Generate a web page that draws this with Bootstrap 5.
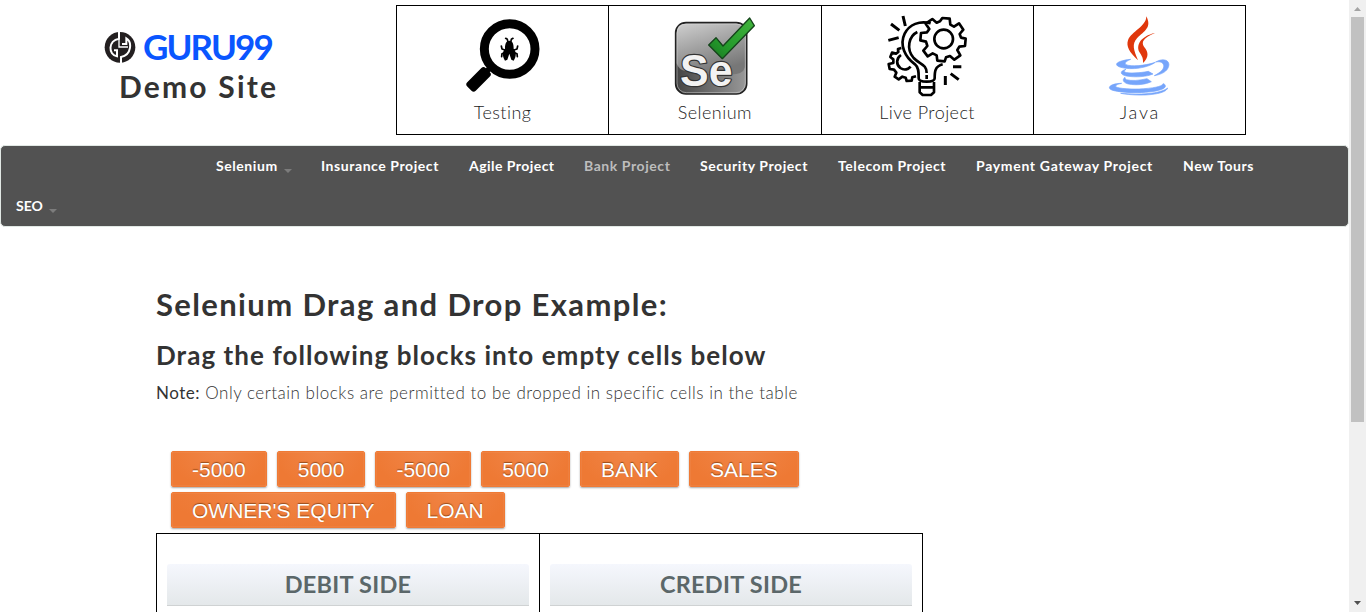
<!DOCTYPE html>
<html lang="en">
<head>
<meta charset="utf-8">
<meta name="viewport" content="width=device-width, initial-scale=1">
<title>Guru99 Demo Site</title>
<link href="https://cdn.jsdelivr.net/npm/bootstrap@5.3.0/dist/css/bootstrap.min.css" rel="stylesheet">
<style>
body{font-family:Lato,"Open Sans",sans-serif;color:#333;background:#fff;font-size:17px;line-height:1.4}
.site-head{height:146px}
.brand-block{width:396px;padding:27px 0 0 103px}
.brand-row{height:40px}
.brand-name{font-size:35px;line-height:38px;padding-bottom:2px;font-weight:700;color:#0a56ff;margin-left:6px;letter-spacing:-1.9px}
.demo-title{font-size:30px;font-weight:700;line-height:36px;margin:1px 0 0 16px;letter-spacing:2.2px}
.tool-grid{width:850px;height:130px;margin-top:5px;border:1px solid #000}
.tool-cell{flex:1 1 0;padding-top:2px;color:#222;font-weight:300;font-size:18px;line-height:24px;letter-spacing:.45px}
.tool-cell+.tool-cell{border-left:1px solid #000}
.tool-cell span{margin-top:2px}
.tool-cell .lbl-d{letter-spacing:1.8px;padding-left:1px}
.main-nav{width:1349px;background:#525252;border-radius:5px;border:1px solid #e1e8e4;padding:0;height:82px;margin-top:-1px}
.main-nav .nav-link{color:#fff;font-weight:700;font-size:14px;line-height:20px;padding:10px 0 10px 15px;height:40px;white-space:nowrap;letter-spacing:.57px}
.main-nav .nav-first{margin-left:200px}
.main-nav .nav-link.active{color:#bdbdbd}
.main-nav .nav-link.tight{letter-spacing:0}
.main-nav .nav-link.w-c{letter-spacing:.45px}
.main-nav .nav-link.w-f{letter-spacing:.69px}
.main-nav .dropdown-toggle::after{border-top-color:#7c7c7c;border-width:4px 4px 0;margin-left:6px;vertical-align:-2px}
.w-a{width:105px}.w-b{width:148px}.w-c{width:115px}.w-d{width:116px}.w-e{width:138px}.w-f{width:207px}.w-g{width:100px}
.lesson{width:767px;margin-left:156px;padding-top:58px}
.t1{font-size:31px;font-weight:700;line-height:38px;margin:0;letter-spacing:1.37px;white-space:nowrap}
.t2{font-size:26px;font-weight:700;line-height:34px;margin:15px 0 0;letter-spacing:1.06px;white-space:nowrap}
.note{font-weight:300;font-size:17px;line-height:24px;margin:9px 0 0;white-space:nowrap;letter-spacing:.52px}
.blocks{gap:5px 10px;padding:46px 100px 0 15px}
.drag{font:21px/24px "Liberation Sans",sans-serif;color:#fff;height:36px;padding:6px 20px 4px;border:1px solid #ef7a35;border-radius:2px;background:radial-gradient(ellipse at 50% 0,#f08547,#ee7934 75%);box-shadow:0 1px 2px rgba(0,0,0,.35),inset 0 0 1px rgba(255,255,255,.5);text-shadow:0 -1px 1px rgba(90,40,0,.6);white-space:nowrap}
.sides{height:300px;margin-top:5px;border:1px solid #000}
.side{flex:1 1 0;padding:30px 10px}
.side+.side{border-left:1px solid #000}
.side h3{height:42px;margin:0;background:linear-gradient(#f5f7fd,#e4e8ea);border-bottom:1px solid #cfd2d3;border-radius:3px 3px 0 0;color:#5b6769;font-size:23.5px;line-height:41px;font-weight:700;text-align:center;letter-spacing:.25px}
.scroller{width:17px;background:#f0f0f0}
.thumb{width:13px;height:405px;background:#c1c1c1}
</style>
</head>
<body class="vh-100 overflow-hidden d-flex">
<main class="flex-grow-1 overflow-hidden">
<header class="site-head d-flex">
 <div class="brand-block">
  <div class="brand-row d-flex align-items-center">
   <svg width="34" height="34" viewBox="9 7 102 102">
    <circle cx="60" cy="59" r="46" fill="#231f20"/>
    <g fill="none" stroke="#fff" stroke-width="6">
     <path d="M57 10V33C24 38 24 82 51 86V68H42"/>
     <path d="M63 110V88C96 82 96 42 79 32V49H66"/>
     <path d="M57 33V58H84" stroke-width="4"/>
    </g>
   </svg>
   <span class="brand-name">GURU99</span>
  </div>
  <h2 class="demo-title">Demo Site</h2>
 </div>
 <div class="tool-grid d-flex">
  <div class="tool-cell d-flex flex-column align-items-center">
   <svg width="90" height="90" viewBox="205 24 270 270">
    <circle cx="360" cy="147" r="76" fill="none" stroke="#000" stroke-width="27"/>
    <path d="M308 197L285 220" stroke="#000" stroke-width="16"/>
    <rect x="-38" y="-18" width="78" height="36" rx="9" transform="translate(266 239) rotate(-45)"/>
    <path d="M359 122c-11 0-13 12-13 24-9 10-8 24 0 36l7-3 6-18 6 18 7 3c8-12 9-26 0-36 0-12-2-24-13-24z"/>
    <g fill="none" stroke="#000" stroke-width="5" stroke-linecap="round" stroke-linejoin="round"><path d="M348 115l5 3 2 9M370 115l-5 3-2 9M335 138l2 9 11 4M384 138l-2 9-11 4M336 170l1-9 11-4M383 170l-1-9-11-4"/></g>
   </svg><span>Testing</span>
  </div>
  <div class="tool-cell d-flex flex-column align-items-center">
   <svg width="90" height="90" viewBox="195 24 270 270">
    <defs><linearGradient id="metal" x1="0" y1="0" x2="0.4" y2="1"><stop stop-color="#cfcfcf"/><stop offset=".5" stop-color="#a2a2a2"/><stop offset="1" stop-color="#777"/></linearGradient>
    <linearGradient id="metal-low" x1="0" y1="0" x2="1" y2="0"><stop stop-color="#444"/><stop offset="1" stop-color="#999"/></linearGradient>
    <linearGradient id="leaf" x1="0" y1="1" x2="1" y2="0"><stop stop-color="#1a7422"/><stop offset=".35" stop-color="#249a2b"/><stop offset="1" stop-color="#43b53e"/></linearGradient></defs>
    <rect x="212" y="68" width="213" height="214" rx="31" fill="url(#metal-low)" stroke="#222" stroke-width="5"/>
    <path d="M215 190V99q0-28 28-28h151q28 0 28 28v91q0 28-28 32-70 8-150-8-24-4-29-24z" fill="url(#metal)"/>
    <rect x="216" y="72" width="205" height="206" rx="28" fill="none" stroke="#ddd" stroke-opacity=".5" stroke-width="3"/>
    <text x="225" y="259" font-family="Liberation Sans,sans-serif" font-weight="700" font-size="134" textLength="158" lengthAdjust="spacingAndGlyphs" fill="#f2f2f2" stroke="#333" stroke-width="7" stroke-linejoin="round" paint-order="stroke">Se</text>
    <path d="M311 135l22-22 21 25 80-84 14 23-96 99z" fill="url(#leaf)" stroke="#14441a" stroke-width="4" stroke-linejoin="round"/>
   </svg><span>Selenium</span>
  </div>
  <div class="tool-cell d-flex flex-column align-items-center">
   <svg width="90" height="90" viewBox="187 25 270 270" fill="none" stroke="#000" stroke-width="8" stroke-linejoin="round">
    <path d="M250 49l7 30M214 73l25 19M206 122l31-8M400 201h25M393 222l24 18M377 229v27" stroke-width="9"/>
    <path d="M333 71c-33-9-64 3-78 31-17 35 2 71 31 92 12 10 11 26 11 42 0 8 8 10 24 10s24-2 24-10c0-20 0-35 24-42"/>
    <path d="M293 97c-25 12-35 50-11 78 19 20 39 18 39 45M321 226v12" />
    <path d="M300 247v31l9 8h25l9-8v-31M300 263h43"/>
    <path d="M368 55l22 2 2 18 11 6 15-10 13 19-11 13 4 11 14 3-2 22-17 2-6 10 9 16-18 13-13-11-12 4-4 12-22-2-2-16-12-6-15 9-13-17 12-14-4-13-17-4 2-22 18-2 7-10-11-16 20-14 13 11 10-4z"/>
    <circle cx="372" cy="118" r="28"/>
    <path d="M245 145l-10 3 1 9-7 5-12-3-5 13 9 7v11l-14 3 3 15 13 2 7 9-5 12 12 8 11-8 10 3 3 10 15-1 2-10 11-3M244 166c-15 10-15 29-2 39 12 8 24 4 31-4"/>
   </svg><span>Live Project</span>
  </div>
  <div class="tool-cell d-flex flex-column align-items-center">
   <svg width="90" height="90" viewBox="192 22 270 270">
    <g fill="#e0370c"><path d="M349 47c17 34-5 43-28 66-16 18-10 34 3 66-26-24-36-42-30-60 10-27 55-41 55-72z"/><path d="M375 97c-35 15-42 27-33 41 14 17 15 31-3 49 2-19-8-26-13-37-8-30 24-48 49-53z"/></g>
    <g fill="#76a5fb" stroke="#76a5fb" stroke-width="2"><path d="M302 176c-40 4-55 16-30 24 32 9 81 2 104-15-34 11-73 13-88 7-6-5 2-11 14-16zM377 184c24-14 44-4 39 13-4 15-20 24-43 28 20-11 30-20 28-31-2-10-12-12-24-10zM288 206c-19 5-19 16 1 20 29 5 61 2 80-6l-14-8c-24 5-59 7-71 2-3-3 0-5 4-8zM285 230c-11 8-3 17 10 20 26 5 52 1 69-7l-13-9c-24 6-47 7-62 3-3-2-4-4-4-7zM275 248c-35 0-50 16-23 22 54 12 147 5 154-12 1-5-3-9-7-9-1 9-33 14-72 16-36 1-73-3-70-9 2-4 9-6 18-8zM413 262c-5 20-81 27-141 16 55 5 118 2 141-16z"/></g>
   </svg><span class="lbl-d">Java</span>
  </div>
 </div>
</header>
<nav class="navbar main-nav d-block">
 <ul class="nav ps-0">
  <li class="nav-item nav-first"><a class="nav-link dropdown-toggle w-a" href="#">Selenium</a></li>
  <li class="nav-item"><a class="nav-link w-b" href="#">Insurance Project</a></li>
  <li class="nav-item"><a class="nav-link w-c" href="#">Agile Project</a></li>
  <li class="nav-item"><a class="nav-link active w-d" href="#">Bank Project</a></li>
  <li class="nav-item"><a class="nav-link w-e" href="#">Security Project</a></li>
  <li class="nav-item"><a class="nav-link w-e" href="#">Telecom Project</a></li>
  <li class="nav-item"><a class="nav-link w-f" href="#">Payment Gateway Project</a></li>
  <li class="nav-item"><a class="nav-link w-g" href="#">New Tours</a></li>
 </ul>
 <ul class="nav"><li class="nav-item"><a class="nav-link dropdown-toggle tight" href="#">SEO</a></li></ul>
</nav>
<section class="lesson">
 <h1 class="t1">Selenium Drag and Drop Example:</h1>
 <h2 class="t2">Drag the following blocks into empty cells below</h2>
 <p class="note"><b>Note:</b> Only certain blocks are permitted to be dropped in specific cells in the table</p>
 <div class="blocks d-flex flex-wrap">
  <a class="drag text-decoration-none">-5000</a><a class="drag text-decoration-none">5000</a><a class="drag text-decoration-none">-5000</a><a class="drag text-decoration-none">5000</a><a class="drag text-decoration-none">BANK</a><a class="drag text-decoration-none">SALES</a><a class="drag text-decoration-none">OWNER'S EQUITY</a><a class="drag text-decoration-none">LOAN</a>
 </div>
 <div class="sides d-flex">
  <div class="side"><h3>DEBIT SIDE</h3></div>
  <div class="side"><h3>CREDIT SIDE</h3></div>
 </div>
</section>
</main>
<aside class="scroller flex-shrink-0 d-flex flex-column align-items-center justify-content-between">
 <div class="d-flex flex-column align-items-center">
  <svg width="17" height="17"><path d="M5 11h7L8.500 7z" fill="#a3a3a3"/></svg>
  <div class="thumb"></div>
 </div>
 <svg width="17" height="17"><path d="M5 6h7L8.500 10z" fill="#505050"/></svg>
</aside>
<script src="https://cdn.jsdelivr.net/npm/bootstrap@5.3.0/dist/js/bootstrap.bundle.min.js"></script>
</body>
</html>
